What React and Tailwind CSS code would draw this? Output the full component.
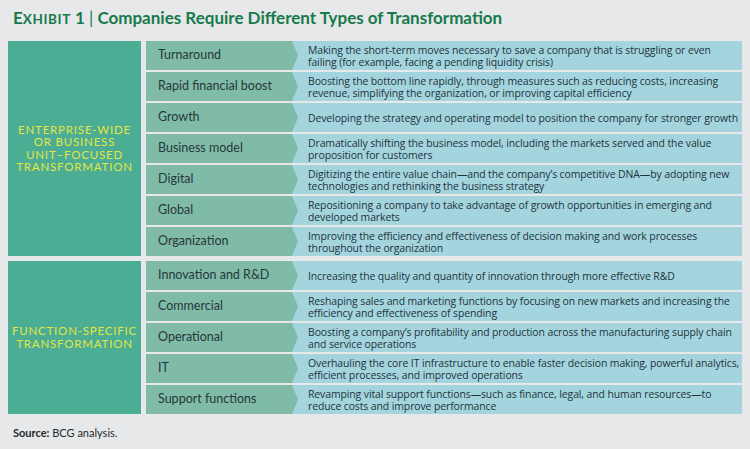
const sections = [
  {
    title: ["ENTERPRISE-WIDE", "OR BUSINESS", "UNIT–FOCUSED", "TRANSFORMATION"],
    rows: [
      { t: "Turnaround", d: ["Making the short-term moves necessary to save a company that is struggling or even", "failing (for example, facing a pending liquidity crisis)"] },
      { t: "Rapid financial boost", d: ["Boosting the bottom line rapidly, through measures such as reducing costs, increasing", "revenue, simplifying the organization, or improving capital efficiency"] },
      { t: "Growth", d: ["Developing the strategy and operating model to position the company for stronger growth"] },
      { t: "Business model", d: ["Dramatically shifting the business model, including the markets served and the value", "proposition for customers"] },
      { t: "Digital", d: ["Digitizing the entire value chain—and the company’s competitive DNA—by adopting new", "technologies and rethinking the business strategy"] },
      { t: "Global", d: ["Repositioning a company to take advantage of growth opportunities in emerging and", "developed markets"] },
      { t: "Organization", d: ["Improving the efficiency and effectiveness of decision making and work processes", "throughout the organization"] },
    ],
  },
  {
    title: ["FUNCTION-SPECIFIC", "TRANSFORMATION"],
    rows: [
      { t: "Innovation and R&D", d: ["Increasing the quality and quantity of innovation through more effective R&D"] },
      { t: "Commercial", d: ["Reshaping sales and marketing functions by focusing on new markets and increasing the", "efficiency and effectiveness of spending"] },
      { t: "Operational", d: ["Boosting a company’s profitability and production across the manufacturing supply chain", "and service operations"] },
      { t: "IT", d: ["Overhauling the core IT infrastructure to enable faster decision making, powerful analytics,", "efficient processes, and improved operations"] },
      { t: "Support functions", d: ["Revamping vital support functions—such as finance, legal, and human resources—to", "reduce costs and improve performance"] },
    ],
  },
];

export default function App() {
  return (
    <main className="h-[449px] w-[750px] bg-[#e7e8e9] px-[8px] pt-[7px] font-['Lato',sans-serif] text-[#26383a]">
      {/* Title */}
      <h1 className="h-[22px] pl-[5px] text-[17px] font-bold leading-[22px] text-[#177a4c]">
        E<span className="text-[13.5px] tracking-[0.6px]">XHIBIT</span> 1{" "}
        <span className="font-normal">|</span> Companies Require Different Types of Transformation
      </h1>

      <div className="mt-[12px] flex flex-col gap-[5px]">
        {sections.map((s) => (
          <div key={s.title[0]} className="flex gap-[5px]">
            <div className="flex w-[133px] shrink-0 items-center justify-center bg-[#4aad94] text-center text-[11.5px] leading-[12.5px] tracking-[0.8px] text-[#e3e643]">
              <div>
                {s.title.map((l) => (
                  <div key={l}>{l}</div>
                ))}
              </div>
            </div>
            <div className="flex w-[597px] flex-col gap-[2px]">
              {s.rows.map((r) => (
                <div key={r.t} className="flex h-[29px] bg-[#a4d5df]">
                  <div className="flex w-[152px] shrink-0 items-center bg-[#80bba8] pl-[12px] text-[12.5px] [clip-path:polygon(0_0,calc(100%-6px)_0,100%_50%,calc(100%-6px)_100%,0_100%)]">
                    {r.t}
                  </div>
                  <div className="flex flex-col justify-center whitespace-nowrap pl-[10px] font-['Open_Sans',sans-serif] text-[10.45px] leading-[12px] tracking-[-0.1px] text-[#22333a]">
                    {r.d.map((l) => (
                      <div key={l}>{l}</div>
                    ))}
                  </div>
                </div>
              ))}
            </div>
          </div>
        ))}
      </div>

      <p className="mt-[11px] pl-[5px] text-[11px] text-[#1f2a2c]">
        <span className="font-bold">Source:</span> BCG analysis.
      </p>
    </main>
  );
}
